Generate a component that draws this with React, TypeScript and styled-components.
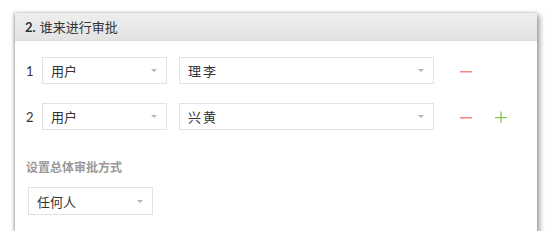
import styled, { createGlobalStyle } from "styled-components";

const Global = createGlobalStyle`
  body {
    margin: 0;
    background: #fff;
    font-family: "Lato", "Noto Sans CJK SC", sans-serif;
  }
`

const Page = styled.div`
  padding: 13px 0 0 15px;
`

const Panel = styled.div`
  width: 522px;
  height: 218px;
  background: #fff;
  box-shadow: 2px 3px 5px 1px rgba(0, 0, 0, 0.35), -1px 0 3px rgba(0, 0, 0, 0.25);
  display: flex;
  flex-direction: column;
`

const Header = styled.div`
  height: 28px;
  display: flex;
  align-items: center;
  padding-left: 10px;
  background: linear-gradient(#eeeeee, #e3e3e3);
  border-bottom: 1px solid #dcdcdc;
  box-sizing: border-box;
  font-size: 13px;
  color: #333;
  b {
    margin-right: 4px;
  }
`

const Body = styled.div`
  padding: 16px 0 0 11px;
  display: flex;
  flex-direction: column;
  gap: 19px;
`

const Row = styled.div`
  display: flex;
  align-items: center;
  height: 27px;
`

const Num = styled.span`
  width: 16px;
  font-size: 13px;
  color: #333;
`

const Select = styled.div<{ $w: number; $ml?: number }>`
  width: ${p => p.$w}px;
  height: 100%;
  margin-left: ${p => p.$ml ?? 0}px;
  box-sizing: border-box;
  border: 1px solid #e2e2e2;
  display: flex;
  align-items: center;
  padding: 0 9px 0 8px;
  font-size: 13px;
  color: #333;
  justify-content: space-between;
`

const Caret = styled.span`
  width: 0;
  height: 0;
  border-left: 3.5px solid transparent;
  border-right: 3.5px solid transparent;
  border-top: 3.5px solid #b5b5b5;
`

const Action = styled.span<{ $ml: number }>`
  margin-left: ${p => p.$ml}px;
  display: flex;
`

const Footer = styled.div`
  padding-left: 11px;
`

const Label = styled.div`
  margin-top: 28px;
  font-size: 12px;
  font-weight: bold;
  color: #999;
`

const Bottom = styled.div`
  margin-top: 12px;
  padding-left: 2px;
  height: 28px;
  display: flex;
`

const Minus = () => (
  <svg width="12" height="12" viewBox="0 0 12 12">
    <rect x="0" y="6" width="12" height="1.5" fill="#f98282" />
  </svg>
)

const Plus = () => (
  <svg width="12" height="12" viewBox="0 0 12 12">
    <rect x="0" y="6" width="12" height="1.2" fill="#80c150" />
    <rect x="5.4" y="0.5" width="1.2" height="12" fill="#80c150" />
  </svg>
)

const rows = [
  { n: 1, who: "理李", add: false },
  { n: 2, who: "兴黄", add: true },
]

const App = () => {
  return (
    <>
      <Global />
      <Page>
        <Panel>
          <Header><b>2.</b>谁来进行审批</Header>
          <Body>
            {rows.map(r => (
              <Row key={r.n}>
                <Num>{r.n}</Num>
                <Select $w={125}>用户<Caret /></Select>
                <Select $w={255} $ml={12}><span style={{ letterSpacing: 2 }}>{r.who}</span><Caret /></Select>
                <Action $ml={26}><Minus /></Action>
                {r.add && <Action $ml={23}><Plus /></Action>}
              </Row>
            ))}
          </Body>
          <Footer>
            <Label>设置总体审批方式</Label>
            <Bottom>
              <Select $w={125}>任何人<Caret /></Select>
            </Bottom>
          </Footer>
        </Panel>
      </Page>
    </>
  )
}

export default App;
